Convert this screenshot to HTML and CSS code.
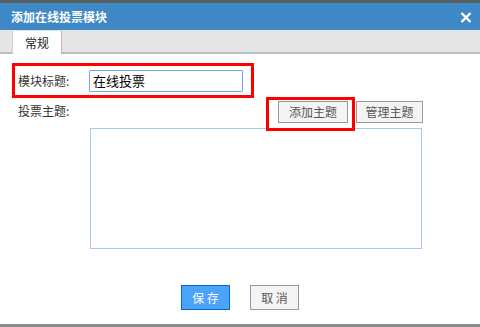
FILE: index.html
```html
<!DOCTYPE html>
<html>
<head>
<meta charset="utf-8">
<link rel="stylesheet" href="styles.css">
</head>
<body>
<div class="dialog">
  <div class="topstrip"></div>
  <div class="titlebar">
    <span class="title">添加在线投票模块</span>
    <svg class="close" width="12" height="11" viewBox="0 0 12 11"><path d="M1.5 1 L10.5 10 M10.5 1 L1.5 10" stroke="#fff" stroke-width="2.4" fill="none"/></svg>
  </div>
  <div class="tabbar">
    <div class="tab">常规</div>
  </div>
  <div class="body">
    <div class="row1">
      <span class="label1">模块标题:</span>
      <input class="input" type="text" value="在线投票">
    </div>
    <div class="row2">
      <span class="label2">投票主题:</span>
      <div class="content">
        <div class="btnrow">
          <span class="hl"><button class="btn">添加主题</button></span>
          <button class="btn btn-manage">管理主题</button>
        </div>
        <div class="area"></div>
      </div>
    </div>
    <div class="footer">
      <button class="fbtn save">保 存</button>
      <button class="fbtn cancel">取 消</button>
    </div>
  </div>
  <div class="bottomstrip"></div>
</div>
</body>
</html>
```

FILE: styles.css
```css
html, body {
  margin: 0;
  padding: 0;
  background: #fff;
}
body {
  font-family: "Noto Sans CJK SC", "Liberation Sans", sans-serif;
  font-size: 12px;
  color: #333;
}
.dialog {
  width: 480px;
  height: 327px;
  display: flex;
  flex-direction: column;
  overflow: hidden;
}
.topstrip {
  height: 3px;
  background: #56615f;
}
.titlebar {
  height: 27px;
  background: #3f88c6;
  display: flex;
  align-items: center;
  justify-content: space-between;
  padding: 0 8px 0 11px;
}
.title {
  color: #fff;
  font-weight: bold;
  font-size: 12px;
  line-height: 14px;
}
.close {
  display: block;
  margin-top: 1px;
}
.tabbar {
  height: 22px;
  background: #e5e5e5;
  border-bottom: 2px solid #bdbdbd;
  display: flex;
  align-items: flex-start;
  padding-left: 12px;
}
.tab {
  width: 48px;
  height: 23px;
  margin-top: 1px;
  background: #fff;
  border-left: 1px solid #d0d0d0;
  border-right: 1px solid #bbbbbb;
  text-align: center;
  line-height: 23px;
  color: #222;
  font-size: 12px;
  position: relative;
  z-index: 1;
}
.body {
  height: 270px;
  background: #fff;
  display: flex;
  flex-direction: column;
  padding: 0 12px;
}
.row1 {
  margin-top: 9px;
  width: 233px;
  height: 29px;
  border: 3px solid #ff0000;
  display: flex;
  align-items: center;
  padding-left: 3px;
}
.label1 {
  width: 71px;
  color: #333;
}
.input {
  box-sizing: border-box;
  width: 154px;
  height: 22px;
  margin: 0;
  padding: 0 3px;
  border: 1px solid #7ba6df;
  border-radius: 1px;
  font-family: "Noto Sans CJK SC", "Liberation Sans", sans-serif;
  font-size: 13px;
  color: #000;
  outline: none;
}
.row2 {
  display: flex;
  padding-top: 3px;
}
.label2 {
  width: 72px;
  padding-left: 6px;
  line-height: 20px;
}
.content {
  width: 333px;
  display: flex;
  flex-direction: column;
}
.btnrow {
  display: flex;
  justify-content: flex-end;
  gap: 8px;
}
.hl {
  position: relative;
  display: block;
}
.hl::after {
  content: "";
  position: absolute;
  left: -12px;
  top: -4px;
  right: -7px;
  bottom: -8px;
  border: 3px solid #ff0000;
  pointer-events: none;
}
.btn {
  box-sizing: border-box;
  display: block;
  width: 70px;
  height: 22px;
  margin: 0;
  padding: 0;
  background: #f4f4f4;
  border: 1px solid #999;
  color: #555;
  font-family: "Noto Sans CJK SC", "Liberation Sans", sans-serif;
  font-size: 12px;
  line-height: 20px;
}
.btn-manage {
  width: 67px;
}
.area {
  box-sizing: border-box;
  margin-top: 5px;
  width: 332px;
  height: 121px;
  border: 1px solid #a9c8ec;
}
.footer {
  margin-top: 36px;
  display: flex;
  justify-content: center;
  gap: 20px;
}
.fbtn {
  box-sizing: border-box;
  width: 49px;
  height: 25px;
  margin: 0;
  padding: 0;
  font-family: "Noto Sans CJK SC", "Liberation Sans", sans-serif;
  font-size: 12px;
}
.save {
  background: #4ba3fc;
  border: 1px solid #0a68c2;
  color: #fff;
}
.cancel {
  background: #f4f4f4;
  border: 1px solid #999;
  color: #555;
}
.bottomstrip {
  height: 3px;
  background: #8a8a8a;
}
```
